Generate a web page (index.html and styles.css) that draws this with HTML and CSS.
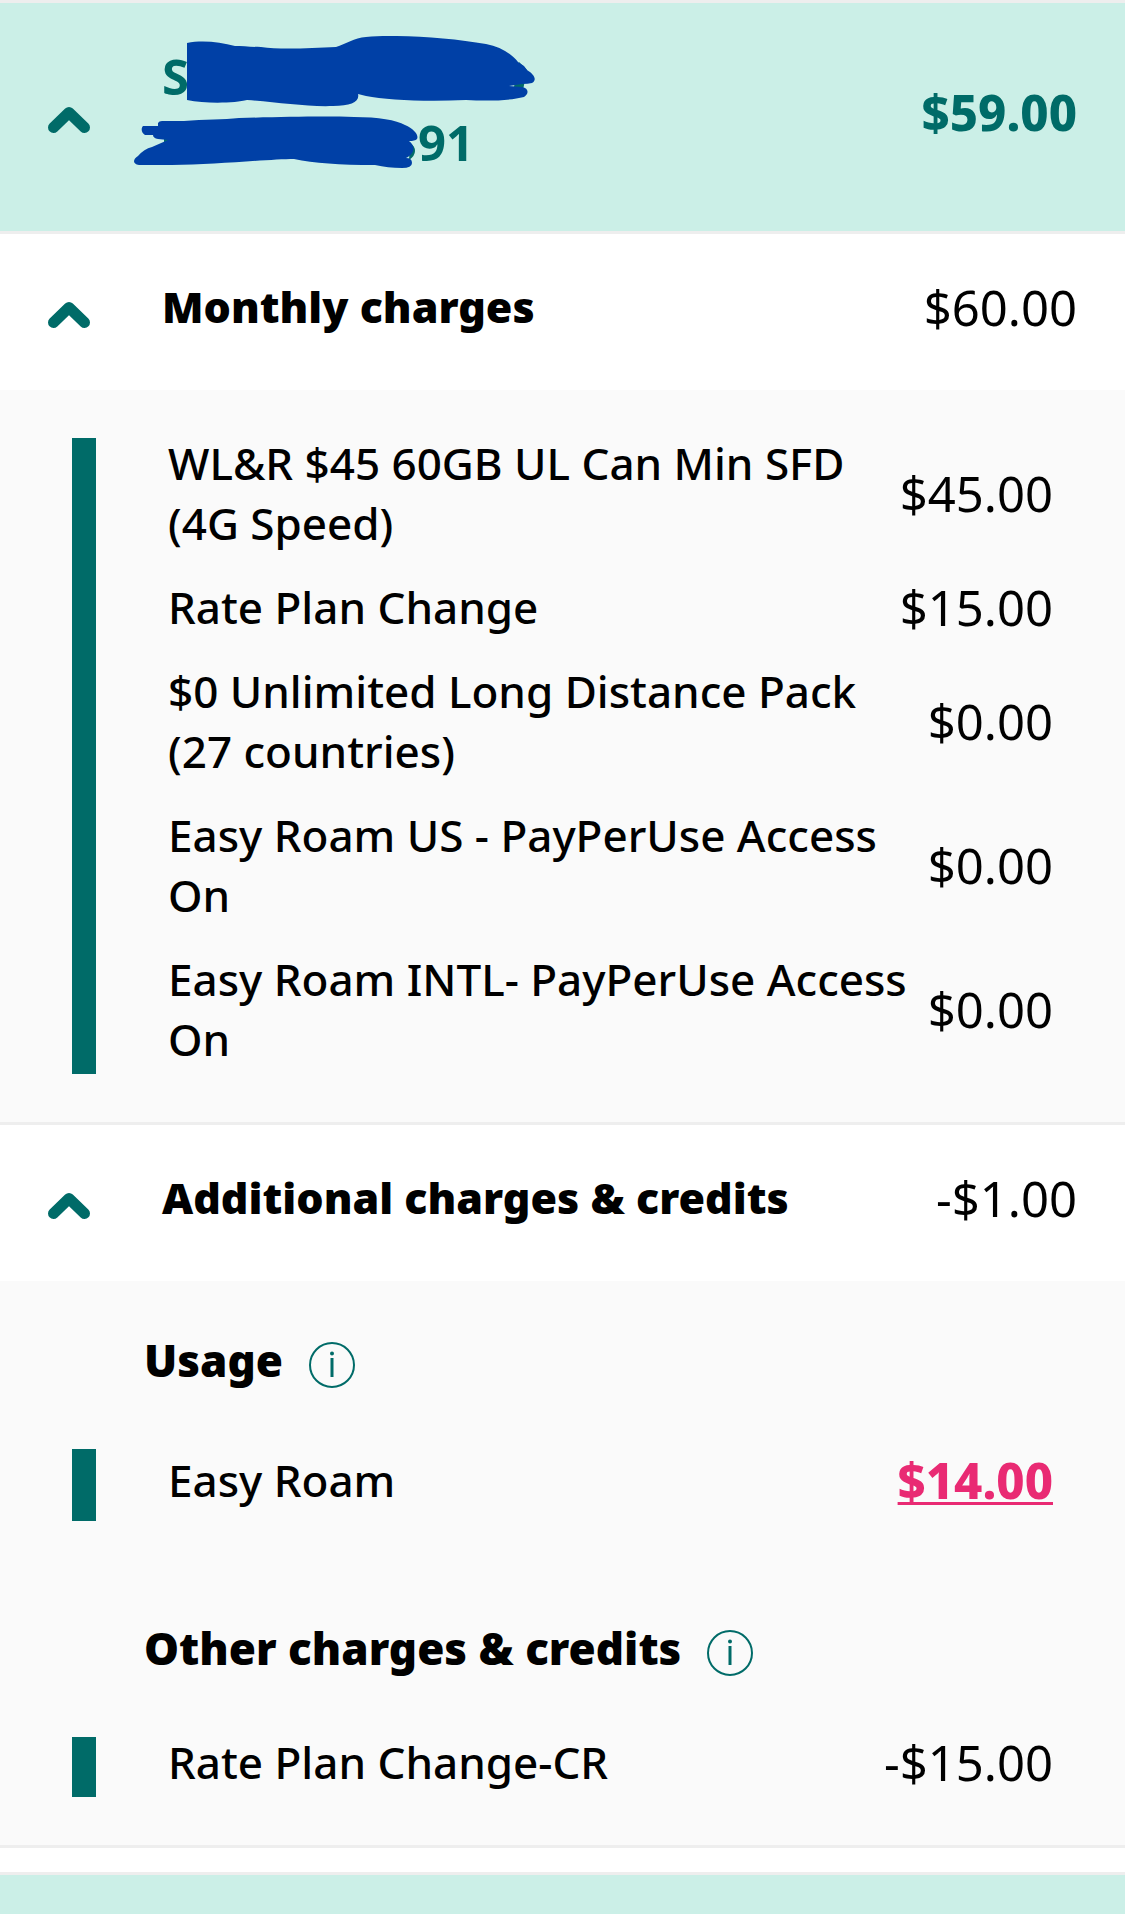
FILE: index.html
```
<!DOCTYPE html>
<html lang="en">
<head>
<meta charset="UTF-8">
<meta name="viewport" content="width=device-width, initial-scale=1.0">
<title>Bill details</title>
<link rel="stylesheet" href="styles.css">
</head>
<body>
<header class="row account">
    <button class="toggle" type="button" aria-label="Collapse account">
        <svg class="chevron" viewBox="0 0 42 26"><path d="M5.500 20.500 21 5.500 36.500 20.500"/></svg>
    </button>
    <div class="owner">
        <div class="owner-line">S<svg class="scribble scribble-name" viewBox="0 0 350 72">
            <path fill="#006b68" d="M333 26l8 8-4 20-10 2z"/>
            <path d="M1 7C16 4 34 6 49 10C56 10 65 11 75 11C95 14 125 12 150 11C160 8 168 2 180 1C215-2 265 2 300 8C315 11 326 18 332 26L338 30 341 34C349 39 351 44 346 47Q342 48 336 48L323 50 336 51C343 52 343 58 338 61C322 65 300 65 280 64C240 66 200 64 180 60L172 58C174 66 165 70 147 70C120 71 90 66 61 64C50 67 20 68 1 64Z"/>
        </svg></div>
        <div class="owner-line"><svg class="scribble scribble-number" viewBox="0 0 284 52">
            <path fill="#006b68" d="M30 22h12v6H30zM276 27q5 3 5 8t-6 9z"/>
            <path d="M9 10H24V7Q25 5 28 5H50C70 3 90 4 105 2C145 1 190 0 220 1C245 1 262 4 271 9C280 13 285 19 283 23Q281 25 275 25C283 31 279 39 272 42Q278 42 278 47Q278 52 268 52C258 52 250 51 241 49C205 49 180 47 160 43C135 43 80 49 38 49L5 49C-2 48-1 43 4 40Q10 33 18 31L34 24 24 23Q19 22 19 19H11C7 17 7 12 9 10Z"/>
        </svg><span>91</span></div>
    </div>
    <span class="amount">$59.00</span>
</header>

<section>
    <div class="row">
        <button class="toggle" type="button" aria-label="Collapse monthly charges">
            <svg class="chevron" viewBox="0 0 42 26"><path d="M5.500 20.500 21 5.500 36.500 20.500"/></svg>
        </button>
        <h2 class="title">Monthly charges</h2>
        <span class="amount">$60.00</span>
    </div>
    <div class="panel">
        <div class="bar">
            <ul class="charges">
                <li><span class="label">WL&amp;R $45 60GB UL Can Min SFD (4G Speed)</span><span>$45.00</span></li>
                <li><span class="label">Rate Plan Change</span><span>$15.00</span></li>
                <li><span class="label">$0 Unlimited Long Distance Pack (27 countries)</span><span>$0.00</span></li>
                <li><span class="label">Easy Roam US - PayPerUse Access On</span><span>$0.00</span></li>
                <li><span class="label">Easy Roam INTL- PayPerUse Access On</span><span>$0.00</span></li>
            </ul>
        </div>
    </div>
</section>

<section>
    <div class="row">
        <button class="toggle" type="button" aria-label="Collapse additional charges">
            <svg class="chevron" viewBox="0 0 42 26"><path d="M5.500 20.500 21 5.500 36.500 20.500"/></svg>
        </button>
        <h2 class="title">Additional charges &amp; credits</h2>
        <span class="amount">-$1.00</span>
    </div>
    <div class="panel">
        <div class="group">
            <h3 class="subtitle">Usage</h3>
            <button class="info" type="button" aria-label="About usage">
                <svg viewBox="0 0 46 46"><circle class="ring" cx="23" cy="23" r="22"/><circle cx="23" cy="11.500" r="2"/><path d="M21.500 16h3v19h-3z"/></svg>
            </button>
        </div>
        <div class="bar bar-link">
            <ul class="charges">
                <li><span class="label">Easy Roam</span><a href="#">$14.00</a></li>
            </ul>
        </div>
        <div class="group">
            <h3 class="subtitle">Other charges &amp; credits</h3>
            <button class="info" type="button" aria-label="About other charges">
                <svg viewBox="0 0 46 46"><circle class="ring" cx="23" cy="23" r="22"/><circle cx="23" cy="11.500" r="2"/><path d="M21.500 16h3v19h-3z"/></svg>
            </button>
        </div>
        <div class="bar">
            <ul class="charges">
                <li><span class="label">Rate Plan Change-CR</span><span>-$15.00</span></li>
            </ul>
        </div>
    </div>
</section>

<!-- next account -->
<footer class="next-account"></footer>
</body>
</html>
```
FILE: styles.css
```
* {
    box-sizing: border-box;
}

body {
    margin: 0;
    min-height: 100vh;
    display: flex;
    flex-direction: column;
    font-family: "Noto Sans", "Open Sans", sans-serif;
    font-size: 49px;
    line-height: 60px;
    color: #000;
    background-color: #fff;
}

button {
    padding: 0;
    border: none;
    background: none;
    cursor: pointer;
}

section {
    border-bottom: 3px solid #eee;
}

.row {
    display: flex;
    align-items: center;
    min-height: 156px;
    padding: 0 48px;
}

.account {
    min-height: 234px;
    border-top: 3px solid #eee;
    border-bottom: 3px solid #eee;
    color: #006b68;
    background-color: #cbefe7;
    font-weight: 800;
}

.toggle {
    flex: none;
    width: 114px;
    padding-top: 6px;
    text-align: left;
}

.chevron {
    display: block;
    width: 42px;
    height: 26px;
    fill: none;
    stroke: #006b68;
    stroke-width: 11;
    stroke-linecap: round;
    stroke-linejoin: round;
}

.owner {
    align-self: flex-start;
    flex: 1;
    padding-top: 40px;
    font-weight: 700;
}

.owner-line {
    display: flex;
    align-items: center;
    height: 66px;
}

/* marker strokes over the private details */
.scribble {
    flex: none;
    fill: #0040a6;
}

.scribble-name {
    width: 350px;
    height: 72px;
    margin-left: -3px;
    margin-bottom: 8px;
}

.scribble-number {
    width: 284px;
    height: 52px;
    margin-left: -28px;
}

.title {
    flex: 1;
    margin: 0;
    padding-bottom: 10px;
    font-size: 43px;
    font-weight: 900;
}

.amount {
    padding-bottom: 10px;
}

.panel {
    padding: 48px 72px;
    background-color: #fafafa;
}

.bar {
    display: flow-root;
    border-left: 24px solid #006b68;
    padding-left: 72px;
}

.bar-link {
    min-height: 72px;
    padding-top: 6px;
    margin-bottom: 96px;
}

.charges {
    display: flex;
    flex-direction: column;
    gap: 24px;
    list-style: none;
    margin: -5px 0 0;
    padding: 0 0 5px;
}

.charges li {
    display: flex;
    align-items: center;
    justify-content: space-between;
    gap: 16px;
}

.charges a {
    color: #e92a73;
    font-weight: 800;
    text-decoration-thickness: 3px;
    text-underline-offset: 3px;
}

.label {
    font-size: 44px;
    font-weight: 500;
}

.group {
    display: flex;
    align-items: center;
    gap: 26px;
    height: 72px;
    margin: 0 0 48px 72px;
}

.subtitle {
    margin: 0;
    padding-bottom: 10px;
    font-size: 44px;
    font-weight: 900;
}

.info {
    width: 46px;
    height: 46px;
    fill: #006b68;
}

.info svg {
    display: block;
}

.ring {
    fill: none;
    stroke: #006b68;
    stroke-width: 2;
}

.next-account {
    flex: 1;
    margin-top: 24px;
    border-top: 3px solid #eee;
    background-color: #cbefe7;
}
```
